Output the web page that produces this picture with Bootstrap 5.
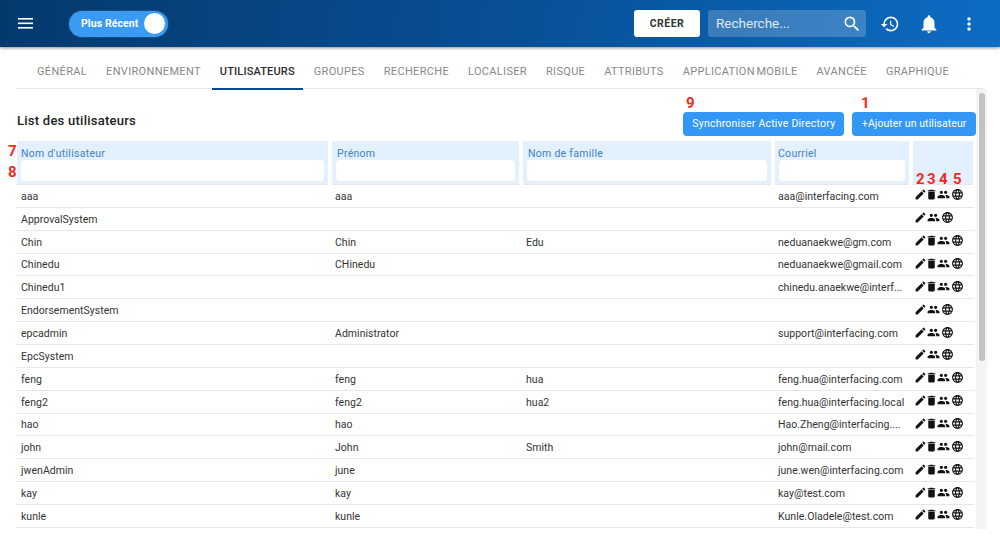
<!DOCTYPE html>
<html lang="fr">
<head>
<meta charset="utf-8">
<title>Utilisateurs</title>
<link href="https://cdn.jsdelivr.net/npm/bootstrap@5.3.0/dist/css/bootstrap.min.css" rel="stylesheet">
<style>
html,body{height:536px;overflow:hidden;background:#fff}
body{font-family:Roboto,"Liberation Sans",sans-serif;font-size:10.5px;color:#333}
.topbar{height:47px;background:linear-gradient(97deg,#05396e 0%,#084f94 50%,#0c6cc4 100%);box-shadow:0 1px 3px rgba(0,0,0,.45);padding:0 21px 0 18px;position:relative;z-index:2}
.toggler{width:99px;height:26px;margin-left:36px;background:#3a9bf5;border-radius:13px;color:#fff;font-size:10.5px;font-weight:700;letter-spacing:.1px;padding:0 3px 0 12px;box-shadow:0 0 0 1px rgba(255,255,255,.08)}
.knob{width:21px;height:21px;border-radius:50%;background:#fff}
.create-btn{width:66px;height:27px;background:#fff;color:#333;font-size:10.5px;font-weight:700;letter-spacing:.5px;border:0;border-radius:3px;padding:0}
.searchbox{width:158px;height:27px;margin-left:8px;background:rgba(255,255,255,.2);border-radius:3px;color:#dfe9f5;font-size:13.5px;padding:0 4px 0 8px}
.head-icons{gap:19px;margin-left:14px}
.hist-icon{margin-right:-1px}
.tabstrip{margin:8px 17px 0 17px;height:34px;border-bottom:1px solid #e6e6e6;padding-left:20px;gap:19px;font-size:11px;color:#888;letter-spacing:.33px;word-spacing:-1.5px}
.tabitem{height:34px;line-height:34px;position:relative;white-space:nowrap}
.tabitem.on{color:#2d2d2d;font-weight:500;letter-spacing:.15px}
.tabitem.on::after{content:"";position:absolute;left:-8px;right:-8px;bottom:-1px;height:2px;background:#0a4a8a}
.workarea{position:relative;height:440px;padding:0 24px 0 17px;overflow:hidden}
.titlerow{height:52px;padding-top:23px}
.pagetitle{font-size:13px;font-weight:500;color:#222;line-height:18px;letter-spacing:.25px}
.blue-btn{height:24px;background:#3398f5;color:#fff;border:0;border-radius:4px;font-size:10.5px;padding:0 9px;letter-spacing:.22px;line-height:24px}
.blue-btn.snug{letter-spacing:.08px;padding:0 9.5px}
.usertable{width:957px;table-layout:fixed;border-collapse:separate;border-spacing:0;margin:0}
.usertable th{background:#e3f0fd;background-clip:padding-box;border-right:4px solid #fff;padding:6px 4px 3px;height:44px;vertical-align:top;font-weight:400;color:#3f82c4;font-size:10.5px;line-height:13px;letter-spacing:.28px;box-shadow:inset 0 -1px 0 #e6e6e6}
.usertable th:nth-child(2),.usertable th:nth-child(3){text-indent:1px}
.usertable th:nth-child(4){text-indent:-1px}
.usertable th:last-child{border-right:1px solid #fff}
.filterbox{height:21px;margin-top:0;background:#fff;border-radius:4px}
.usertable td{height:22.86px;padding:.8px 4px 0;border-bottom:1px solid #e6e6e6;color:#333;white-space:nowrap;overflow:hidden;font-size:10.5px;letter-spacing:.03px;line-height:21px;vertical-align:middle}
.usertable td:nth-child(2),.usertable td:nth-child(3){padding-left:3px}
.usertable td:nth-child(4){padding-left:3px;padding-right:3px}
.usertable td.acts{padding:0 0 2px .5px;line-height:0;overflow:visible}
.acts svg{display:inline-block;width:13px;height:13px;vertical-align:middle}
.acts svg.bin{margin-left:-2px;margin-right:-1px}
.acts svg.ppl{margin-right:1.5px}
.redmark{position:absolute;color:#f02a22;font-size:15px;font-weight:700;line-height:15px}
.railtrack{position:absolute;left:976px;top:-1px;width:11px;height:441px;background:#f4f4f4}
.railthumb{position:absolute;left:979px;top:4px;width:6px;height:268px;background:#c2c2c2;border-radius:3px}
</style>
</head>
<body>
<header class="topbar d-flex align-items-center">
  <svg width="15" height="11" viewBox="0 0 15 11" fill="#fff" aria-hidden="true"><rect y="0" width="15" height="1.6"/><rect y="4.5" width="15" height="1.6"/><rect y="9" width="15" height="1.6"/></svg>
  <div class="toggler d-flex align-items-center justify-content-between"><span>Plus Récent</span><span class="knob"></span></div>
  <div class="flex-grow-1"></div>
  <button class="create-btn" type="button">CRÉER</button>
  <div class="searchbox d-flex align-items-center justify-content-between"><span>Recherche...</span>
    <svg width="20" height="20" viewBox="0 0 24 24" fill="#fff" aria-hidden="true"><path d="M15.5 14h-.79l-.28-.27A6.47 6.47 0 0 0 16 9.5 6.5 6.5 0 1 0 9.5 16c1.61 0 3.09-.59 4.23-1.57l.27.28v.79l5 4.99L20.49 19l-4.99-5zm-6 0C7.01 14 5 11.99 5 9.5S7.01 5 9.5 5 14 7.01 14 9.5 11.99 14 9.5 14z"/></svg></div>
  <div class="head-icons d-flex align-items-center">
    <svg class="hist-icon" width="20" height="20" viewBox="0 0 24 24" fill="#fff" aria-hidden="true"><path d="M13 3a9 9 0 0 0-9 9H1l3.89 3.89.07.14L9 12H6c0-3.87 3.13-7 7-7s7 3.13 7 7-3.13 7-7 7c-1.93 0-3.68-.79-4.94-2.06l-1.42 1.42A8.954 8.954 0 0 0 13 21a9 9 0 0 0 0-18zm-1 5v5l4.28 2.54.72-1.21-3.5-2.08V8H12z"/></svg>
    <svg width="22" height="22" viewBox="0 0 24 24" fill="#fff" aria-hidden="true"><path d="M12 22c1.1 0 2-.9 2-2h-4c0 1.1.9 2 2 2zm6-6v-5c0-3.07-1.63-5.64-4.5-6.32V4c0-.83-.67-1.5-1.5-1.5s-1.5.67-1.5 1.5v.68C7.64 5.36 6 7.92 6 11v5l-2 2v1h16v-1l-2-2z"/></svg>
    <svg width="20" height="20" viewBox="0 0 24 24" fill="#fff" aria-hidden="true"><path d="M12 8c1.1 0 2-.9 2-2s-.9-2-2-2-2 .9-2 2 .9 2 2 2zm0 2c-1.1 0-2 .9-2 2s.9 2 2 2 2-.9 2-2-.9-2-2-2zm0 6c-1.1 0-2 .9-2 2s.9 2 2 2 2-.9 2-2-.9-2-2-2z"/></svg>
  </div>
</header>

<nav class="tabstrip d-flex">
  <div class="tabitem">GÉNÉRAL</div><div class="tabitem">ENVIRONNEMENT</div><div class="tabitem on">UTILISATEURS</div><div class="tabitem">GROUPES</div><div class="tabitem">RECHERCHE</div><div class="tabitem">LOCALISER</div><div class="tabitem">RISQUE</div><div class="tabitem">ATTRIBUTS</div><div class="tabitem">APPLICATION MOBILE</div><div class="tabitem">AVANCÉE</div><div class="tabitem">GRAPHIQUE</div>
</nav>

<main class="workarea">
  <div class="titlerow d-flex justify-content-between align-items-start">
    <div class="pagetitle">List des utilisateurs</div>
    <div class="d-flex gap-2" id="btns">
      <button class="blue-btn" type="button">Synchroniser Active Directory</button>
      <button class="blue-btn snug" type="button">+Ajouter un utilisateur</button>
    </div>
  </div>
  <table class="usertable">
    <colgroup><col style="width:315px"><col style="width:191px"><col style="width:252px"><col style="width:138px"><col style="width:61px"></colgroup>
    <thead><tr>
      <th>Nom d'utilisateur<div class="filterbox"></div></th>
      <th>Prénom<div class="filterbox"></div></th>
      <th>Nom de famille<div class="filterbox"></div></th>
      <th>Courriel<div class="filterbox"></div></th>
      <th></th>
    </tr></thead>
    <tbody id="rows"></tbody>
  </table>
  <div class="railtrack"></div>
  <div class="railthumb"></div>
  <span class="redmark" style="left:861px;top:7px">1</span>
  <span class="redmark" style="left:686px;top:7px">9</span>
  <span class="redmark" style="left:8px;top:55px">7</span>
  <span class="redmark" style="left:8px;top:76px">8</span>
  <span class="redmark" style="left:916px;top:83px">2</span>
  <span class="redmark" style="left:927px;top:83px">3</span>
  <span class="redmark" style="left:939px;top:83px">4</span>
  <span class="redmark" style="left:953px;top:83px">5</span>
</main>

<script src="https://cdn.jsdelivr.net/npm/bootstrap@5.3.0/dist/js/bootstrap.bundle.min.js"></script>
<script>
var pen='<svg viewBox="0 0 24 24" fill="#111"><path d="M3 17.25V21h3.75L17.81 9.94l-3.75-3.75L3 17.25zM20.71 7.04a1 1 0 0 0 0-1.41l-2.34-2.34a1 1 0 0 0-1.41 0l-1.83 1.83 3.75 3.75 1.83-1.83z"/></svg>';
var bin='<svg class="bin" viewBox="0 0 24 24" fill="#111"><path d="M6 19c0 1.1.9 2 2 2h8c1.1 0 2-.9 2-2V7H6v12zM19 4h-3.5l-1-1h-5l-1 1H5v2h14V4z"/></svg>';
var ppl='<svg class="ppl" viewBox="0 0 24 24" fill="#111"><path d="M16 11c1.66 0 2.99-1.34 2.99-3S17.66 5 16 5s-3 1.34-3 3 1.34 3 3 3zm-8 0c1.66 0 2.99-1.34 2.99-3S9.66 5 8 5 5 6.34 5 8s1.34 3 3 3zm0 2c-2.33 0-7 1.17-7 3.5V19h14v-2.5C15 14.17 10.33 13 8 13zm8 0c-.29 0-.62.02-.97.05 1.16.84 1.97 1.97 1.97 3.45V19h6v-2.5c0-2.33-4.67-3.5-7-3.5z"/></svg>';
var web='<svg viewBox="0 0 24 24" fill="#111"><path d="M11.99 2C6.47 2 2 6.48 2 12s4.47 10 9.99 10C17.52 22 22 17.52 22 12S17.52 2 11.99 2zm6.93 6h-2.95a15.65 15.65 0 0 0-1.38-3.56A8.03 8.03 0 0 1 18.92 8zM12 4.04c.83 1.2 1.48 2.53 1.91 3.96h-3.82c.43-1.43 1.08-2.76 1.91-3.96zM4.26 14C4.1 13.36 4 12.69 4 12s.1-1.36.26-2h3.38c-.08.66-.14 1.32-.14 2s.06 1.34.14 2H4.26zm.82 2h2.95c.32 1.25.78 2.45 1.38 3.56A7.987 7.987 0 0 1 5.08 16zm2.95-8H5.08a7.987 7.987 0 0 1 4.33-3.56A15.65 15.65 0 0 0 8.03 8zM12 19.96c-.83-1.2-1.48-2.53-1.91-3.96h3.82c-.43 1.43-1.08 2.76-1.91 3.96zM14.34 14H9.66c-.09-.66-.16-1.32-.16-2s.07-1.35.16-2h4.68c.09.65.16 1.32.16 2s-.07 1.34-.16 2zm.25 5.56c.6-1.11 1.06-2.31 1.38-3.56h2.95a8.03 8.03 0 0 1-4.33 3.56zM16.36 14c.08-.66.14-1.32.14-2s-.06-1.34-.14-2h3.38c.16.64.26 1.31.26 2s-.1 1.36-.26 2h-3.38z"/></svg>';
var data=[["aaa","aaa","","aaa@interfacing.com",1],["ApprovalSystem","","","",0],["Chin","Chin","Edu","neduanaekwe@gm.com",1],["Chinedu","CHinedu","","neduanaekwe@gmail.com",1],["Chinedu1","","","chinedu.anaekwe@interf...",1],["EndorsementSystem","","","",0],["epcadmin","Administrator","","support@interfacing.com",0],["EpcSystem","","","",0],["feng","feng","hua","feng.hua@interfacing.com",1],["feng2","feng2","hua2","feng.hua@interfacing.local",1],["hao","hao","","Hao.Zheng@interfacing....",1],["john","John","Smith","john@mail.com",1],["jwenAdmin","june","","june.wen@interfacing.com",1],["kay","kay","","kay@test.com",1],["kunle","kunle","","Kunle.Oladele@test.com",1]];
document.getElementById('rows').innerHTML=data.map(function(r){
  return '<tr><td>'+r[0]+'</td><td>'+r[1]+'</td><td>'+r[2]+'</td><td>'+r[3]+'</td><td class="acts">'+pen+(r[4]?bin:'')+ppl+web+'</td></tr>';
}).join('');
</script>
</body>
</html>
